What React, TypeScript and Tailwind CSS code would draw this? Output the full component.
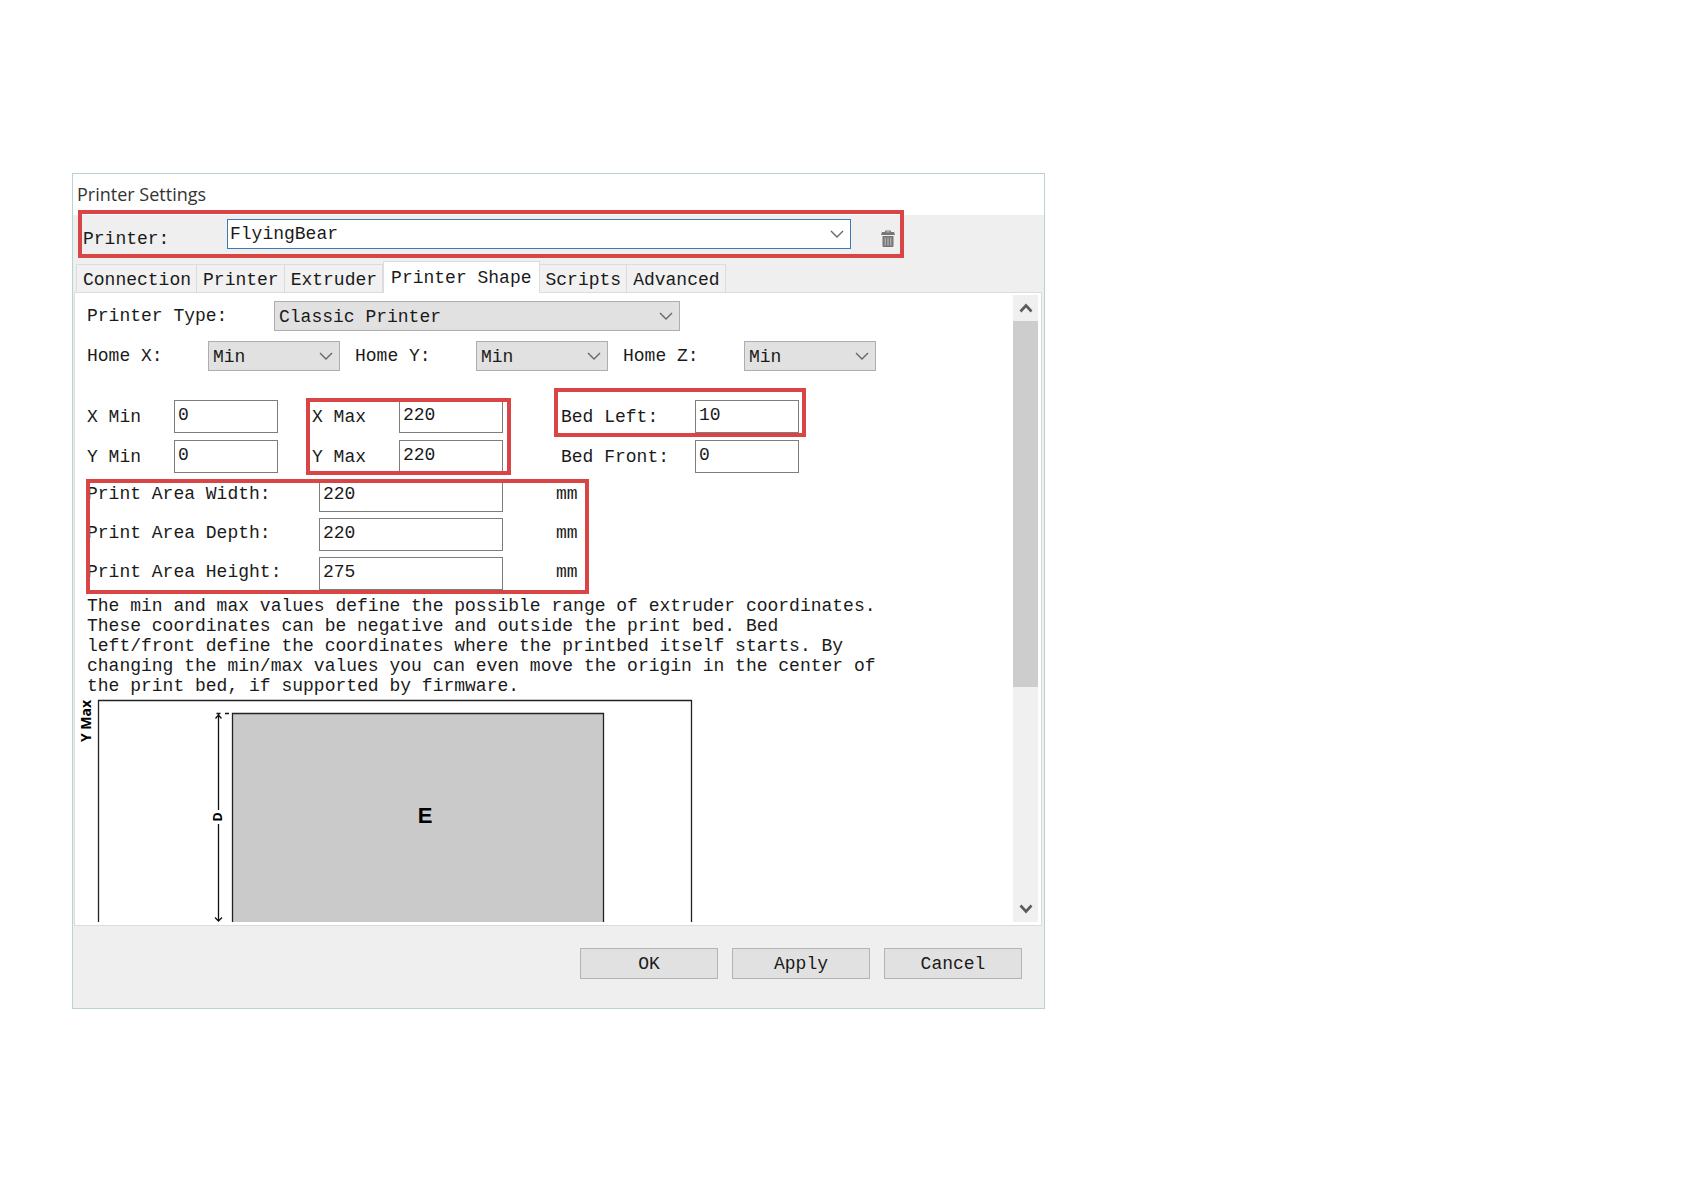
import { useState } from "react";
import clsx from "clsx";

const TABS = ["Connection", "Printer", "Extruder", "Printer Shape", "Scripts", "Advanced"];

function Highlight({ className }: { className: string }) {
  return <span className={clsx("pointer-events-none absolute border-4 border-[#d94545]", className)} />;
}

type SelectBoxProps = {
  id: string;
  options: string[];
  className?: string;
  selectClassName: string;
};

function SelectBox({ id, options, className, selectClassName }: SelectBoxProps) {
  return (
    <div className={clsx("relative h-[30px]", className)}>
      <select id={id} className={clsx("block h-full w-full appearance-none border leading-5 outline-none", selectClassName)}>
        {options.map((o) => (
          <option key={o}>{o}</option>
        ))}
      </select>
      <svg viewBox="0 0 14 8" className="pointer-events-none absolute top-[11px] right-[7px] h-2 w-[14px]" fill="none" stroke="#666" strokeWidth="1.4">
        <path d="M1 1l6 6 6-6" />
      </svg>
    </div>
  );
}

type FieldProps = {
  id: string;
  label: string;
  value: string;
  labelClassName: string;
  inputClassName: string;
  unit?: string;
};

function Field({ id, label, value, labelClassName, inputClassName, unit }: FieldProps) {
  const [text, setText] = useState(value);

  return (
    <div className="flex items-center">
      <label htmlFor={id} className={clsx("shrink-0 whitespace-nowrap", labelClassName)}>
        {label}
      </label>
      <input
        id={id}
        type="text"
        value={text}
        onChange={(e) => setText(e.target.value)}
        className={clsx("h-[33px] border border-[#7d7d7d] bg-white pb-1 pl-[3px] leading-5 outline-none", inputClassName)}
      />
      {unit && <span className="ml-[53px] pb-1">{unit}</span>}
    </div>
  );
}

function TrashIcon() {
  return (
    <svg viewBox="0 0 14 18" className="h-[18px] w-[14px]" fill="#767676">
      <path d="M4 1.500q0-1 1-1h4q1 0 1 1V2h3l1 3H0l1-3h3z" />
      <path d="M5.500 1.500h3v.8h-3z" fill="#efefef" />
      <path d="M1.500 6h11v10q0 1-1 1h-9q-1 0-1-1z" />
      <path d="M4.200 7.500v8M7 7.500v8M9.800 7.500v8" stroke="#c4c4c4" strokeWidth="1" />
    </svg>
  );
}

// Top view of the printable volume, cut off at the lower edge of the scroll area
function BedDiagram() {
  return (
    <svg width="640" height="226" viewBox="0 0 640 226" className="block max-w-full" fontFamily="'Open Sans', sans-serif" fontWeight="700">
      <path d="M23.500 226V4.500H616.500V226" fill="none" stroke="#222" strokeWidth="1.300" />
      <rect x="157" y="17" width="371" height="209" fill="#cacaca" />
      <path d="M157.500 226V17.500H528.500V226" fill="none" stroke="#222" strokeWidth="1.300" />
      <path d="M143.500 18V114M143.500 128V225M140.500 22.500l3-3.500 3 3.500M141.500 17.500h4M150 17.500h4M140 221.500l3.500 3.500 3.500-3.500" fill="none" stroke="#111" strokeWidth="1.300" />
      <text x="350" y="127" textAnchor="middle" fontSize="22" fontFamily="'Liberation Sans', sans-serif">E</text>
      <text transform="translate(147 121) rotate(-90)" textAnchor="middle" fontSize="13">D</text>
      <text transform="translate(16 46) rotate(-90)" fontSize="14">Y Max</text>
    </svg>
  );
}

function ScrollBar() {
  return (
    <div className="mt-[2px] mr-[3px] flex w-[25px] shrink-0 flex-col bg-[#f0f0f0]">
      <button type="button" aria-label="Scroll up" className="flex h-[26px] items-center justify-center">
        <svg viewBox="0 0 14 10" className="h-[10px] w-[14px]" fill="none" stroke="#5c5c5c" strokeWidth="2.600">
          <path d="M1.500 8.500L7 2.500l5.500 6" />
        </svg>
      </button>
      <div className="flex-[7] bg-[#cdcdcd]" />
      <div className="flex-[4]" />
      <button type="button" aria-label="Scroll down" className="flex h-[26px] items-center justify-center">
        <svg viewBox="0 0 14 10" className="h-[10px] w-[14px]" fill="none" stroke="#5c5c5c" strokeWidth="2.600">
          <path d="M1.500 1.500L7 7.500l5.500-6" />
        </svg>
      </button>
    </div>
  );
}

export default function App() {
  const [tab, setTab] = useState("Printer Shape");

  return (
    <div className="min-h-screen bg-white px-[72px] py-[173px] font-['Liberation_Mono',monospace] text-[18px] leading-5 text-[#1a1a1a]">
      <div className="w-full max-w-[973px] border border-[#b9d3cf] bg-[#efefef]">
        <h1 className="h-[41px] bg-white pt-2 pl-1 font-['Open_Sans',sans-serif] text-[18px] leading-6 text-[#333]">
          Printer Settings
        </h1>

        <div className="pt-1 pb-3">
          <div className="relative ml-[5px] flex w-[826px] max-w-full items-end pr-[6px] pl-[5px]">
            <label htmlFor="printer" className="w-36 shrink-0">Printer:</label>
            <SelectBox id="printer" options={["FlyingBear"]} className="flex-1" selectClassName="border-[#3b7ab8] bg-white pl-[2px]" />
            <button type="button" aria-label="Delete printer" className="ml-[27px] flex h-5 w-5 items-center justify-center">
              <TrashIcon />
            </button>
            <Highlight className="inset-x-0 -top-[9px] -bottom-[9px]" />
          </div>
        </div>

        <div role="tablist" className="relative flex h-[31px] items-end pl-[3px]">
          {TABS.map((name) => (
            <button
              key={name}
              type="button"
              role="tab"
              aria-selected={tab === name}
              onClick={() => setTab(name)}
              className={clsx(
                "border border-b-0 border-[#dcdcdc] whitespace-nowrap",
                tab === name ? "-mb-px h-8 bg-white px-[7px]" : "h-7 border-l-0 bg-[#f1f1f1] pt-[2px] pr-[5px] pl-[6px] first:border-l"
              )}
            >
              {name}
            </button>
          ))}
        </div>

        <div className="mr-[2px] ml-px flex border border-[#dcdcdc] bg-white pb-[3px]">
          <div className="min-w-0 flex-1 pt-2 pl-3">
            <div className="flex items-center">
              <label htmlFor="type" className="w-[187px] shrink-0">Printer Type:</label>
              <SelectBox
                id="type"
                options={["Classic Printer"]}
                className="w-[406px]"
                selectClassName="border-[#adadad] bg-[#e1e1e1] pt-[2px] pl-1"
              />
            </div>

            <div className="mt-[10px] flex gap-[15px]">
              {["X", "Y", "Z"].map((axis) => (
                <div key={axis} className="flex items-center">
                  <label htmlFor={`home-${axis}`} className="w-[121px] shrink-0">Home {axis}:</label>
                  <SelectBox
                    id={`home-${axis}`}
                    options={["Min", "Max"]}
                    className="w-[132px]"
                    selectClassName="border-[#adadad] bg-[#e1e1e1] pt-[2px] pl-1"
                  />
                </div>
              ))}
            </div>

            <div className="mt-[29px] flex">
              <div className="flex w-[225px] flex-col gap-[7px]">
                <Field id="x-min" label="X Min" value="0" labelClassName="w-[87px]" inputClassName="w-[104px]" />
                <Field id="y-min" label="Y Min" value="0" labelClassName="w-[87px]" inputClassName="w-[104px]" />
              </div>
              <div className="relative mr-[58px] flex flex-col gap-[7px]">
                <Field id="x-max" label="X Max" value="220" labelClassName="w-[87px]" inputClassName="w-[104px]" />
                <Field id="y-max" label="Y Max" value="220" labelClassName="w-[87px]" inputClassName="w-[104px]" />
                <Highlight className="-top-[2px] -right-2 -bottom-[2px] -left-[6px]" />
              </div>
              <div className="flex flex-col gap-[7px]">
                <div className="relative">
                  <Field id="bed-left" label="Bed Left:" value="10" labelClassName="w-[134px]" inputClassName="w-[104px]" />
                  <Highlight className="-top-3 -right-[7px] -bottom-1 -left-[7px]" />
                </div>
                <Field id="bed-front" label="Bed Front:" value="0" labelClassName="w-[134px]" inputClassName="w-[104px]" />
              </div>
            </div>

            <div className="relative mt-[6px] flex w-[502px] flex-col gap-[6px]">
              <Field id="width" label="Print Area Width:" value="220" labelClassName="w-[232px] pb-1" inputClassName="w-[184px]" unit="mm" />
              <Field id="depth" label="Print Area Depth:" value="220" labelClassName="w-[232px] pb-1" inputClassName="w-[184px]" unit="mm" />
              <Field id="height" label="Print Area Height:" value="275" labelClassName="w-[232px] pb-1" inputClassName="w-[184px]" unit="mm" />
              <Highlight className="top-0 right-0 -bottom-1 -left-px" />
            </div>

            <p className="mt-[6px]">
              The min and max values define the possible range of extruder coordinates.
              <br />
              These coordinates can be negative and outside the print bed. Bed
              <br />
              left/front define the coordinates where the printbed itself starts. By
              <br />
              changing the min/max values you can even move the origin in the center of
              <br />
              the print bed, if supported by firmware.
            </p>

            <div className="-ml-3">
              <BedDiagram />
            </div>
          </div>
          <ScrollBar />
        </div>

        <div className="flex justify-end gap-[14px] pt-[22px] pr-[22px] pb-[29px]">
          {["OK", "Apply", "Cancel"].map((name) => (
            <button key={name} type="button" className="h-[31px] w-[138px] border border-[#b4b4b4] bg-[#e1e1e1]">
              {name}
            </button>
          ))}
        </div>
      </div>
    </div>
  );
}
